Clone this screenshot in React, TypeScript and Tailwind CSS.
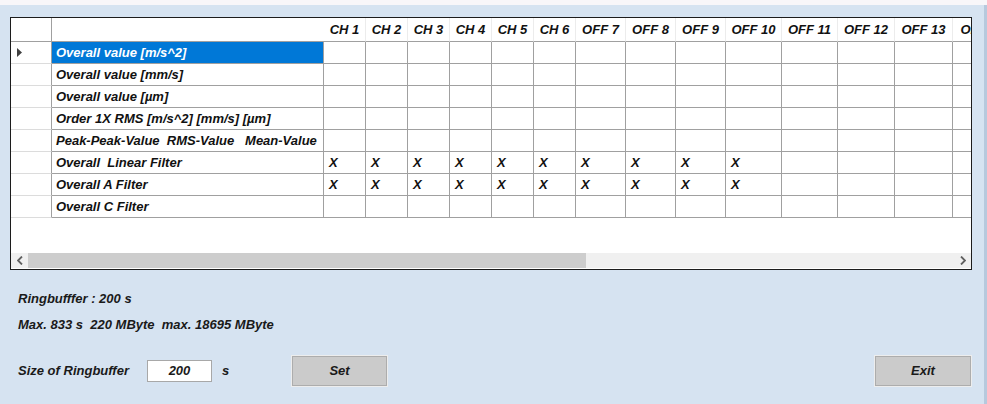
import React from 'react';

const headers = ['CH 1','CH 2','CH 3','CH 4','CH 5','CH 6','OFF 7','OFF 8','OFF 9','OFF 10','OFF 11','OFF 12','OFF 13','OFF 14'];
const rows = [
  'Overall value [m/s^2]',
  'Overall value [mm/s]',
  'Overall value [µm]',
  'Order 1X RMS [m/s^2] [mm/s] [µm]',
  'Peak-Peak-Value  RMS-Value   Mean-Value',
  'Overall  Linear Filter',
  'Overall A Filter',
  'Overall C Filter',
];
const checked = [5, 6];

const font = { fontFamily: '"Liberation Sans", Arial, sans-serif' };

export default function App() {
  return (
    <div className="w-[987px] h-[404px] overflow-hidden bg-[#d6e3f1] flex flex-col text-[#111] font-bold italic text-[13px]" style={font}>
      <div className="h-[5px] bg-[#f8f6f9] shrink-0" />
      <div className="flex flex-1">
        <div className="flex-1 flex flex-col">
          {/* grid box */}
          <div className="ml-[10px] mt-[12px] w-[962px] h-[253px] border border-[#1c1c1c] bg-white flex flex-col overflow-hidden">
            <div className="w-[960px] overflow-hidden flex-1">
              <div className="grid grid-cols-[41px_272px_42px_42px_42px_42px_42px_42px_50px_50px_50px_56px_56px_57px_58px_60px] w-[1002px]">
                {/* header row */}
                <div className="h-[24px] border-r border-b border-r-[#a0a0a0] border-b-[#a0a0a0]" />
                <div className="h-[24px] border-b border-[#a0a0a0]" />
                {headers.map((h) => (
                  <div key={h} className="h-[24px] border-b border-r border-b-[#a0a0a0] border-r-[#ececec] flex items-center justify-center whitespace-nowrap">
                    {h}
                  </div>
                ))}
                {rows.map((r, ri) => (
                  <React.Fragment key={r}>
                    <div className="h-[22px] border-r border-b border-r-[#a0a0a0] border-b-[#dcdcdc] flex items-center pl-[6px]">
                      {ri === 0 && (
                        <svg width="5" height="9" viewBox="0 0 5 9"><polygon points="0,0 5,4.5 0,9" fill="#404040" /></svg>
                      )}
                    </div>
                    <div className={`h-[22px] border-r border-b border-[#a0a0a0] flex items-center pl-[4px] whitespace-pre ${ri === 0 ? 'bg-[#0078d7] text-white' : ''}`}>
                      {r}
                    </div>
                    {headers.map((h, ci) => (
                      <div key={h} className="h-[22px] border-r border-b border-[#a0a0a0] flex items-center pl-[5px]">
                        {checked.includes(ri) && ci < 10 ? 'X' : ''}
                      </div>
                    ))}
                  </React.Fragment>
                ))}
              </div>
            </div>
            {/* horizontal scrollbar */}
            <div className="h-[15px] bg-[#f0f0f0] flex items-center shrink-0 mb-[1px]">
              <div className="w-[17px] h-full flex items-center justify-center">
                <svg width="6" height="9" viewBox="0 0 6 9"><polyline points="5,0.5 1,4.5 5,8.5" fill="none" stroke="#606060" strokeWidth="1.8" /></svg>
              </div>
              <div className="w-[558px] h-full bg-[#cdcdcd]" />
              <div className="flex-1" />
              <div className="w-[17px] h-full flex items-center justify-center">
                <svg width="6" height="9" viewBox="0 0 6 9"><polyline points="1,0.5 5,4.5 1,8.5" fill="none" stroke="#606060" strokeWidth="1.8" /></svg>
              </div>
            </div>
          </div>

          {/* footer */}
          <div className="pl-[18px] mt-[21px] leading-[16px] text-[#1a1a1a]">Ringbufffer : 200 s</div>
          <div className="pl-[18px] mt-[10px] leading-[16px] text-[#1a1a1a] whitespace-pre">Max. 833 s  220 MByte  max. 18695 MByte</div>
          <div className="mt-[23px] pl-[18px] pr-[13px] flex items-center h-[30px] text-[#1a1a1a]">
            <div className="w-[129px] whitespace-nowrap">Size of Ringbuffer</div>
            <div className="w-[65px] h-[22px] bg-white border border-[#a8a8a8] flex items-center justify-center">200</div>
            <div className="ml-[10px] w-[7px]">s</div>
            <div className="ml-[63px] w-[95px] h-[30px] bg-[#cbcbcb] border border-[#adadad] shadow-[0_0_0_1px_#ededed] flex items-center justify-center">Set</div>
            <div className="ml-auto w-[96px] h-[30px] bg-[#cbcbcb] border border-[#adadad] shadow-[0_0_0_1px_#ededed] flex items-center justify-center">Exit</div>
          </div>
        </div>
        <div className="w-[3px] bg-[#b7c9dd]" />
      </div>
    </div>
  );
}
